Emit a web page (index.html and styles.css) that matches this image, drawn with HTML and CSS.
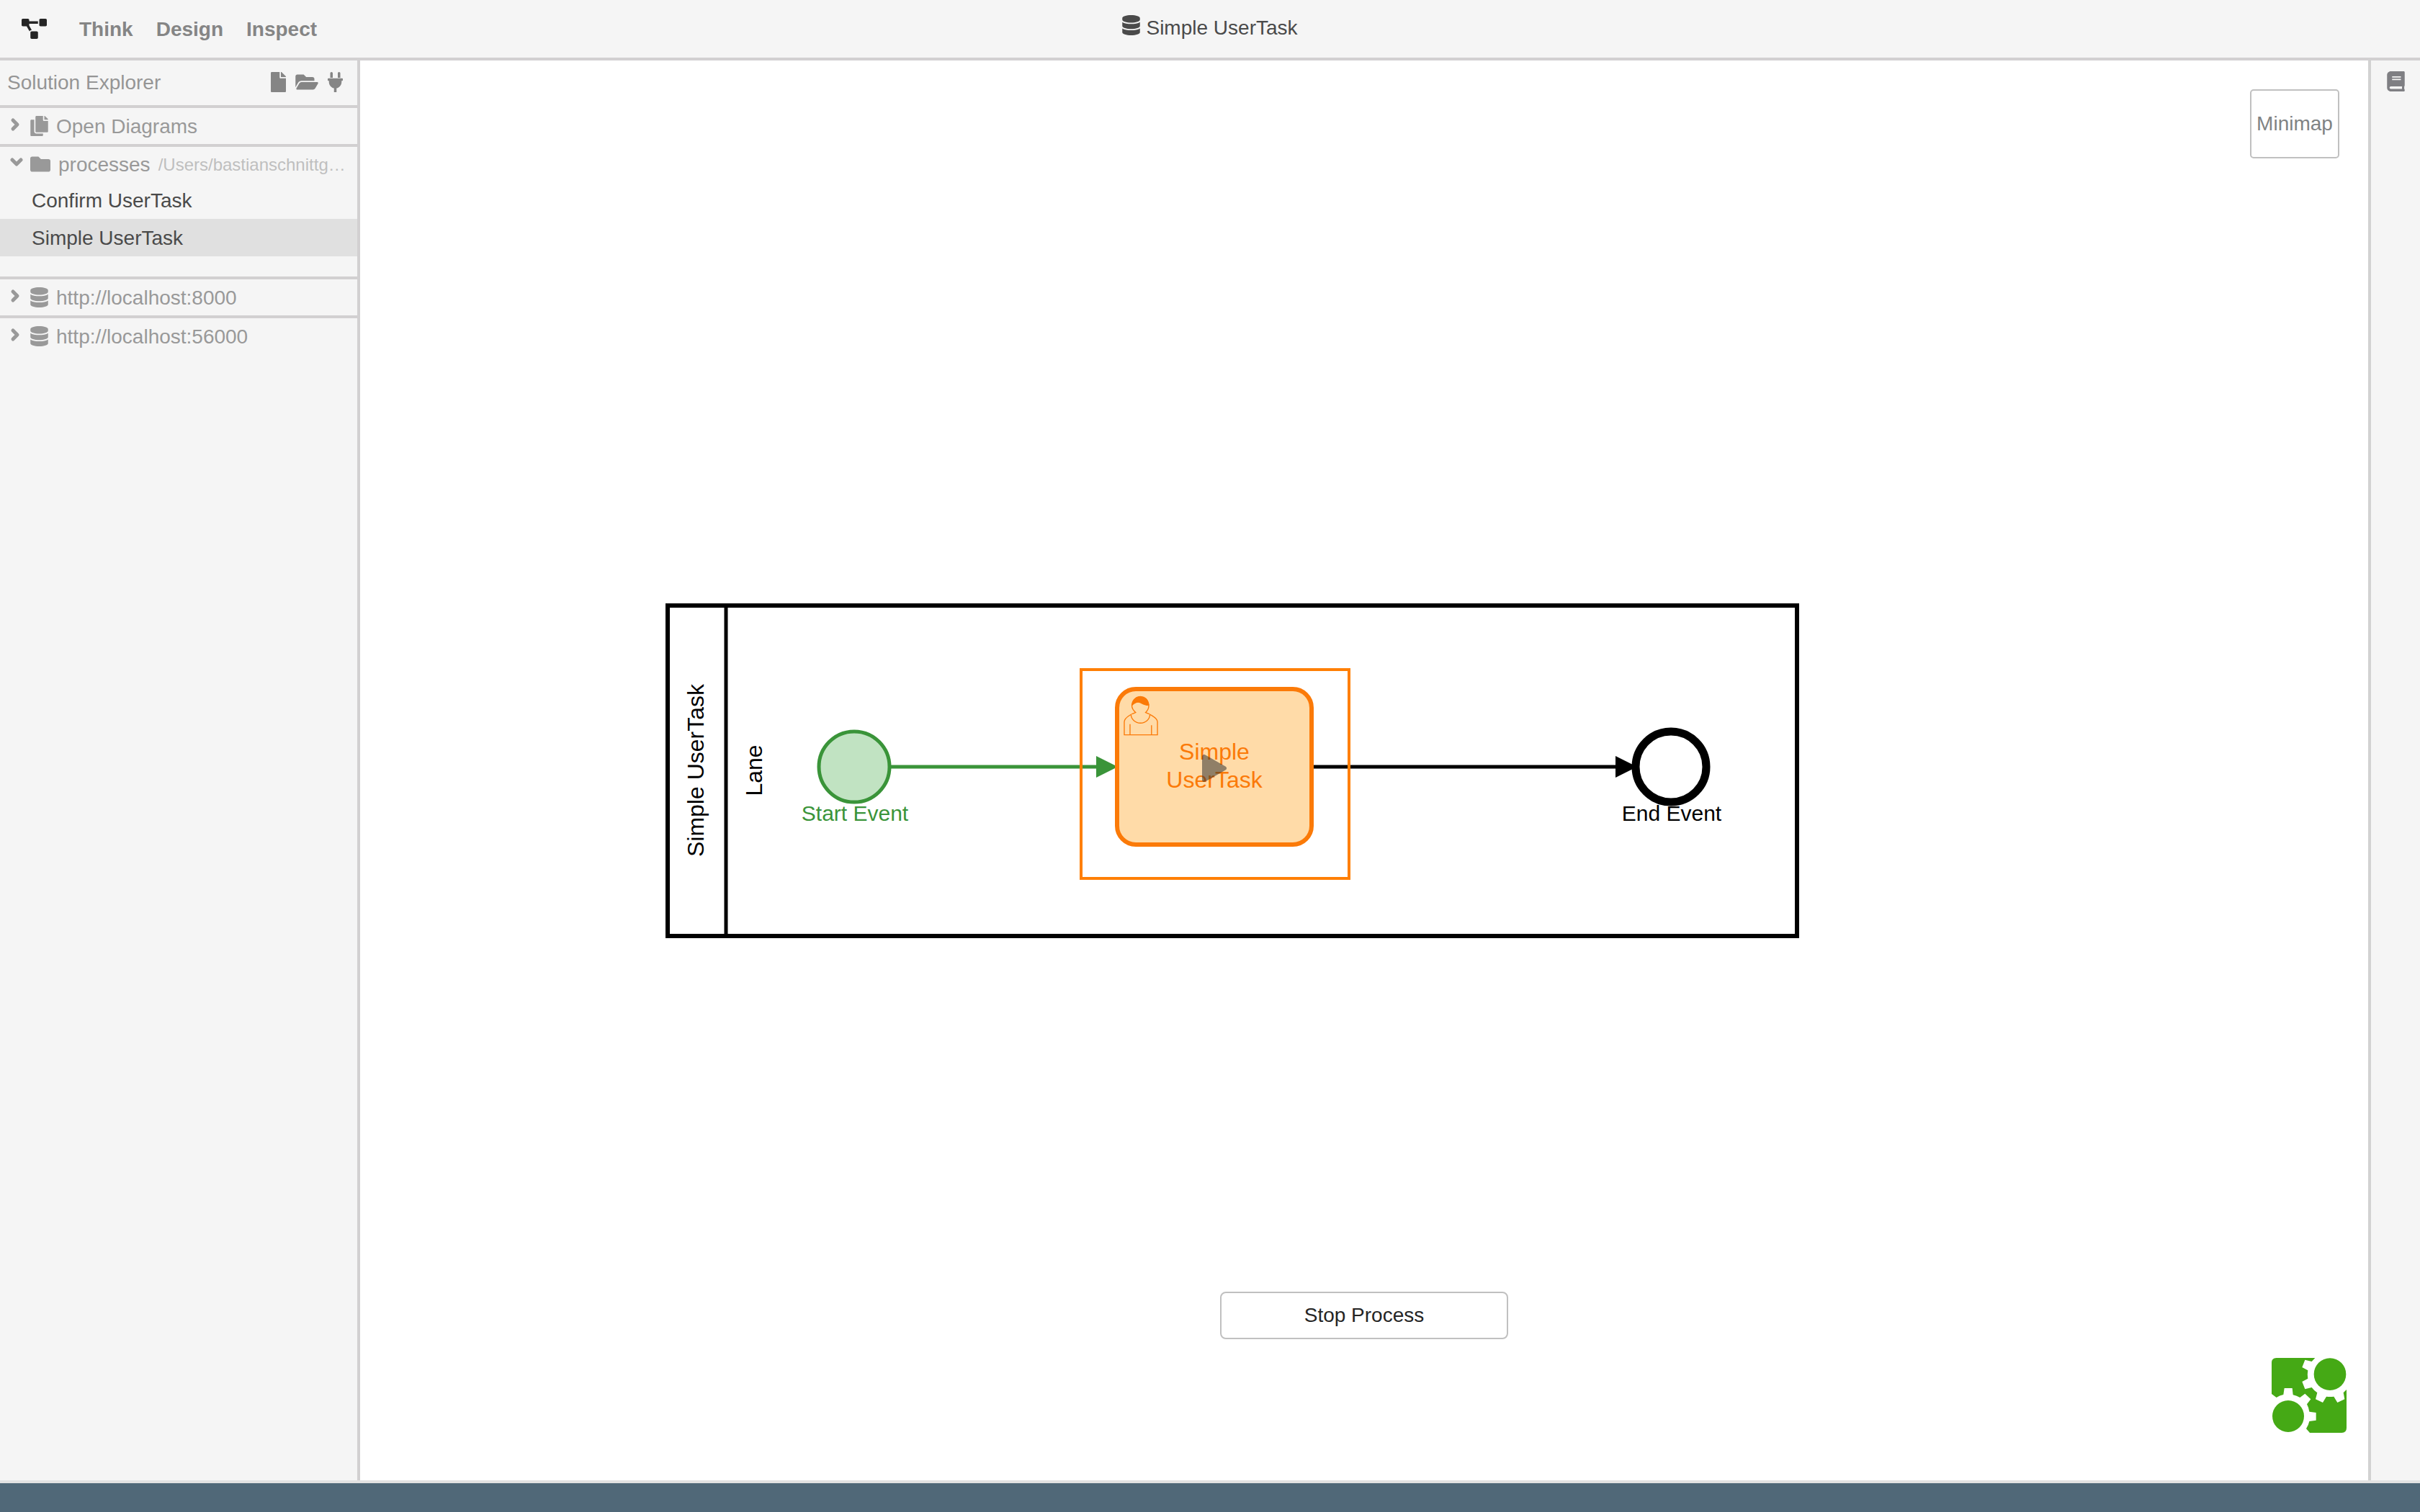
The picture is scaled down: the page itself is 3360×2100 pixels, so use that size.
FILE: index.html
```html
<!DOCTYPE html>
<html lang="en">
<head>
<meta charset="utf-8">
<title>Simple UserTask</title>
<link rel="stylesheet" href="styles.css">
</head>
<body class="app">
<svg class="sprite" aria-hidden="true">
  <symbol id="database" viewBox="0 0 448 512"><path d="M448 73.143v45.714C448 159.143 347.667 192 224 192S0 159.143 0 118.857V73.143C0 32.857 100.333 0 224 0s224 32.857 224 73.143zM448 176v102.857C448 319.143 347.667 352 224 352S0 319.143 0 278.857V176c48.125 33.143 136.208 48.572 224 48.572S399.874 209.143 448 176zm0 160v102.857C448 479.143 347.667 512 224 512S0 479.143 0 438.857V336c48.125 33.143 136.208 48.572 224 48.572S399.874 369.143 448 336z"/></symbol>
  <symbol id="chevron-right" viewBox="0 0 20 28"><path class="chevron" d="M4 6l6 6-6 6"/></symbol>
  <symbol id="chevron-down" viewBox="0 0 20 28"><path class="chevron" d="M3 8l6 6 6-6"/></symbol>
</svg>

<header class="topbar">
  <nav class="nav">
    <svg class="icon logo" viewBox="0 0 640 512" aria-hidden="true"><path d="M384 320H256c-17.67 0-32 14.33-32 32v128c0 17.67 14.33 32 32 32h128c17.67 0 32-14.33 32-32V352c0-17.67-14.33-32-32-32zM192 32c0-17.67-14.33-32-32-32H32C14.33 0 0 14.33 0 32v128c0 17.67 14.33 32 32 32h95.72l73.16 128.04C211.98 300.98 232.4 288 256 288h.28L192 175.51V128h224V64H192V32zM608 0H480c-17.67 0-32 14.33-32 32v128c0 17.67 14.33 32 32 32h128c17.67 0 32-14.33 32-32V32c0-17.67-14.33-32-32-32z"/></svg>
    <a class="nav-link" href="#think">Think</a>
    <a class="nav-link" href="#design">Design</a>
    <a class="nav-link" href="#inspect">Inspect</a>
  </nav>
  <div class="title">
    <svg class="icon icon-mid" aria-hidden="true"><use href="#database"/></svg>
    <span class="title-text">Simple UserTask</span>
  </div>
</header>

<div class="workspace">
  <aside class="explorer">
    <div class="explorer-head">
      <span class="explorer-title">Solution Explorer</span>
      <button class="tool" type="button" aria-label="New diagram"><svg class="icon icon-narrow" viewBox="0 0 384 512"><path d="M224 136V0H24C10.7 0 0 10.7 0 24v464c0 13.3 10.7 24 24 24h336c13.3 0 24-10.7 24-24V160H248c-13.2 0-24-10.8-24-24zm160-14.1v6.1H256V0h6.1c6.4 0 12.5 2.5 17 7l97.9 98c4.5 4.5 7 10.6 7 16.9z"/></svg></button>
      <button class="tool" type="button" aria-label="Open solution"><svg class="icon icon-wide" viewBox="0 0 576 512"><path d="M572.694 292.093L500.27 416.248A63.997 63.997 0 0 1 444.989 448H45.025c-18.523 0-30.064-20.093-20.731-36.093l72.424-124.155A64 64 0 0 1 152 256h399.964c18.523 0 30.064 20.093 20.73 36.093zM152 224h328v-48c0-26.51-21.49-48-48-48H272l-64-64H48C21.49 64 0 85.49 0 112v278.046l69.077-118.418C86.214 242.25 117.989 224 152 224z"/></svg></button>
      <button class="tool" type="button" aria-label="Connect to engine"><svg class="icon icon-narrow" viewBox="0 0 384 512"><path d="M256 144V32c0-17.673 14.327-32 32-32s32 14.327 32 32v112h-64zm112 16H16c-8.837 0-16 7.163-16 16v32c0 8.837 7.163 16 16 16h16v32c0 77.406 54.969 141.971 128 156.796V512h64v-99.204c73.031-14.825 128-79.39 128-156.796v-32h16c8.837 0 16-7.163 16-16v-32c0-8.837-7.163-16-16-16zm-240-16V32c0-17.673-14.327-32-32-32S64 14.327 64 32v112h64z"/></svg></button>
    </div>

    <section class="solution">
      <button class="solution-head" type="button" aria-expanded="false">
        <svg class="icon icon-chevron" aria-hidden="true"><use href="#chevron-right"/></svg>
        <svg class="icon icon-mid" viewBox="0 0 448 512" aria-hidden="true"><path d="M320 448v40c0 13.255-10.745 24-24 24H24c-13.255 0-24-10.745-24-24V120c0-13.255 10.745-24 24-24h72v296c0 30.879 25.121 56 56 56h168zm0-344V0H152c-13.255 0-24 10.745-24 24v368c0 13.255 10.745 24 24 24h272c13.255 0 24-10.745 24-24V128H344c-13.2 0-24-10.8-24-24zm120.971-31.029L375.029 7.029A24 24 0 0 0 358.059 0H352v96h96v-6.059a24 24 0 0 0-7.029-16.97z"/></svg>
        <span class="solution-name">Open Diagrams</span>
      </button>
    </section>

    <section class="solution solution-open">
      <button class="solution-head" type="button" aria-expanded="true">
        <svg class="icon icon-chevron" aria-hidden="true"><use href="#chevron-down"/></svg>
        <svg class="icon icon-folder" viewBox="0 0 512 512" aria-hidden="true"><path d="M464 128H272l-64-64H48C21.49 64 0 85.49 0 112v288c0 26.51 21.49 48 48 48h416c26.51 0 48-21.49 48-48V176c0-26.51-21.49-48-48-48z"/></svg>
        <span class="solution-name">processes</span>
        <span class="solution-path">/Users/bastianschnittg…</span>
      </button>
      <ul class="files">
        <li><a class="file" href="#confirm">Confirm UserTask</a></li>
        <li><a class="file file-active" href="#simple">Simple UserTask</a></li>
      </ul>
    </section>

    <section class="solution">
      <button class="solution-head" type="button" aria-expanded="false">
        <svg class="icon icon-chevron" aria-hidden="true"><use href="#chevron-right"/></svg>
        <svg class="icon icon-mid" aria-hidden="true"><use href="#database"/></svg>
        <span class="solution-name">http://localhost:8000</span>
      </button>
    </section>

    <section class="solution">
      <button class="solution-head" type="button" aria-expanded="false">
        <svg class="icon icon-chevron" aria-hidden="true"><use href="#chevron-right"/></svg>
        <svg class="icon icon-mid" aria-hidden="true"><use href="#database"/></svg>
        <span class="solution-name">http://localhost:56000</span>
      </button>
    </section>
  </aside>

  <main class="canvas">
    <svg class="diagram" width="1582" height="472" viewBox="0 0 1582 472" role="img" aria-label="Simple UserTask process">
      <!-- pool and lane -->
      <rect class="pool" x="7" y="7" width="1568" height="459"/>
      <path class="flow" d="M88 7v459"/>
      <text class="label" transform="translate(57 236) rotate(-90)">Simple UserTask</text>
      <text class="label" transform="translate(138 236) rotate(-90)">Lane</text>

      <!-- start event, already passed -->
      <path class="flow flow-done" d="M317 231H604"/>
      <path class="head-done" d="M602 216l30 15-30 15z"/>
      <circle class="start" cx="266" cy="231" r="49"/>
      <text class="label label-small label-done" x="267" y="306">Start Event</text>

      <!-- end event -->
      <path class="flow" d="M903 231h422"/>
      <path d="M1323 216l30 15-30 15z"/>
      <circle class="end" cx="1400" cy="231" r="49"/>
      <text class="label label-small" x="1401" y="306">End Event</text>

      <!-- active user task -->
      <rect class="task" x="631" y="123" width="270" height="216" rx="26"/>
      <g class="user" transform="translate(630 123) scale(2.71)">
        <path d="m15,12c.909-.845 1.594-2.049 1.594-3.385 0-2.554-1.805-4.622-4.357-4.622-2.552 0-4.288 2.068-4.288 4.622 0 1.348.974 2.562 1.896 3.405-.529.187-5.669 2.097-5.794 4.756v6.718h17v-6.718c0-2.298-5.528-4.595-6.051-4.776zm-8,6v5.5m11,0v-5"/>
        <path d="m17.162 13.009c0 2.447-2.158 4.431-4.821 4.431s-4.822-1.981-4.822-4.431"/>
        <path class="user-hair" d="m8.1 8.2c0 0 2.25-2.358 4.274-1.177 2.024 1.181 4.221 1.537 4.124.965-.098-.57-.117-3.791-4.191-4.136-3.572 0-4.208 4.348-4.207 4.348z"/>
      </g>
      <text class="label label-task" x="766" y="221">Simple</text>
      <text class="label label-task" x="766" y="260">UserTask</text>
      <path class="play" d="M752 217v32l28-16z"/>
      <rect class="outline" x="581" y="96" width="372" height="290"/>
    </svg>

    <button class="minimap" type="button">Minimap</button>
    <button class="stop" type="button">Stop Process</button>

    <svg class="brand" viewBox="0 0 312 312" role="img" aria-label="bpmn.io">
      <path d="M20 0H181L167 15L139 8L127 39L151 52A93 93 0 0 0 151 86L127 99L139 130L167 123A93 93 0 0 0 190 145L183 172L213 186L228 161A93 93 0 0 0 259 161L274 186L304 172L299 145L312 132V292Q312 312 292 312H159L144 295A90 90 0 0 0 157 264L185 260V228L157 224A90 90 0 0 0 147 193L163 172L139 149L118 165A90 90 0 0 0 89 154L86 126H53L49 153A90 90 0 0 0 20 165L0 150V20Q0 0 20 0z"/>
      <circle cx="243" cy="68" r="67"/>
      <circle cx="69" cy="243" r="66"/>
    </svg>
  </main>

  <aside class="panel">
    <button class="tool tool-panel" type="button" aria-label="Properties"><svg class="icon icon-mid" viewBox="0 0 448 512"><path d="M448 360V24c0-13.3-10.7-24-24-24H96C43 0 0 43 0 96v320c0 53 43 96 96 96h328c13.3 0 24-10.7 24-24v-16c0-7.5-3.5-14.3-8.9-18.7-4.2-15.4-4.2-59.3 0-74.7 5.4-4.3 8.9-11.1 8.9-18.6zM128 134c0-3.3 2.7-6 6-6h212c3.3 0 6 2.7 6 6v20c0 3.3-2.7 6-6 6H134c-3.3 0-6-2.7-6-6v-20zm0 64c0-3.3 2.7-6 6-6h212c3.3 0 6 2.7 6 6v20c0 3.3-2.7 6-6 6H134c-3.3 0-6-2.7-6-6v-20zm253.4 250H96c-17.7 0-32-14.3-32-32 0-17.6 14.4-32 32-32h285.4c-1.9 17.1-1.9 46.9 0 64z"/></svg></button>
  </aside>
</div>

<footer class="statusbar"></footer>
</body>
</html>
```

FILE: styles.css
```css
* {
  box-sizing: border-box;
}

.app {
  display: flex;
  flex-direction: column;
  height: 100vh;
  margin: 0;
  background: #fff;
  color: #4a4a4a;
  font-family: "Liberation Sans", Arial, sans-serif;
  font-size: 28px;
  line-height: 32px;
}

.sprite {
  display: none;
}

button {
  padding: 0;
  border: 0;
  background: none;
  color: inherit;
  font: inherit;
  cursor: pointer;
}

a {
  color: inherit;
  text-decoration: none;
}

/* icons */

.icon {
  display: block;
  flex: none;
  height: 28px;
  fill: currentColor;
}

.icon-narrow {
  width: 21px;
}

.icon-mid {
  width: 25px;
}

.icon-folder {
  width: 28px;
}

.icon-wide {
  width: 32px;
}

.icon-chevron {
  width: 20px;
}

.chevron {
  fill: none;
  stroke: currentColor;
  stroke-width: 5;
  stroke-linecap: round;
  stroke-linejoin: round;
}

/* top bar */

.topbar {
  display: grid;
  grid-template-columns: 1fr auto 1fr;
  align-items: center;
  flex: none;
  height: 84px;
  border-bottom: 4px solid #d2d0d1;
  background: #f5f5f5;
}

.nav {
  display: flex;
  align-items: center;
  gap: 32px;
  padding-left: 30px;
}

.logo {
  width: 35px;
  margin-right: 13px;
  color: #252525;
}

.nav-link {
  padding-top: 2px;
  color: #858585;
  font-weight: bold;
}

.title {
  display: flex;
  align-items: flex-start;
  gap: 8px;
  padding-bottom: 4px;
}

.title-text {
  padding-top: 2px;
}

/* columns */

.workspace {
  display: flex;
  flex: 1;
  min-height: 0;
}

.explorer {
  flex: none;
  width: 500px;
  border-right: 4px solid #d2d0d1;
  background: #f5f5f5;
  color: #999;
}

.explorer-head {
  display: flex;
  align-items: center;
  gap: 13px;
  height: 62px;
  padding: 0 20px 2px 10px;
}

.explorer-title {
  flex: 1;
  padding-top: 2px;
  color: #959595;
}

.tool {
  color: #858585;
}

.solution {
  border-top: 4px solid #d2d0d1;
}

.solution-head {
  display: flex;
  align-items: center;
  gap: 8px;
  width: 100%;
  height: 50px;
  padding-left: 14px;
  text-align: left;
}

.solution-name {
  padding: 2px 0 0 3px;
}

.solution-path {
  padding: 2px 0 0 3px;
  color: #bfbfbf;
  font-size: 24px;
}

.solution-open {
  padding-bottom: 28px;
}

.solution-open .solution-head {
  height: 48px;
}

.files {
  margin: 0;
  padding: 0;
  list-style: none;
}

.file {
  display: block;
  padding: 11px 44px 9px;
  color: #4a4a4a;
}

.file-active {
  background: #e0e0e0;
}

/* diagram canvas */

.canvas {
  position: relative;
  display: flex;
  align-items: center;
  flex: 1;
  min-width: 0;
  padding-left: 420px;
  overflow: hidden;
}

.diagram {
  flex: none;
}

.pool {
  fill: none;
  stroke: #000;
  stroke-width: 6;
}

.flow {
  fill: none;
  stroke: #000;
  stroke-width: 5;
}

.flow-done {
  stroke: #3a9439;
}

.head-done,
.label-done {
  fill: #3a9439;
}

.start {
  fill: #c1e3c2;
  stroke: #3a9439;
  stroke-width: 5;
}

.end {
  fill: #fff;
  stroke: #000;
  stroke-width: 11;
}

.task {
  fill: #ffdba8;
  stroke: #fb7a08;
  stroke-width: 6;
}

.outline {
  fill: none;
  stroke: #ff7f04;
  stroke-width: 4;
}

.user {
  fill: #ffdba8;
  stroke: #fb7a08;
  stroke-width: 0.5;
}

.user-hair {
  fill: #fb7a08;
}

.play {
  fill: #2c2c2c;
  stroke: #2c2c2c;
  stroke-width: 6;
  stroke-linejoin: round;
  opacity: 0.52;
}

.label {
  font-size: 32px;
  text-anchor: middle;
}

.label-small {
  font-size: 30px;
}

.label-task {
  fill: #fb7a08;
}

/* controls floating over the canvas */

.minimap {
  position: absolute;
  top: 40px;
  right: 40px;
  width: 124px;
  height: 96px;
  border: 2px solid #c0c0c0;
  border-radius: 5px;
  background: #fff;
  color: #808384;
}

.stop {
  position: absolute;
  bottom: 196px;
  left: calc(50% - 200px);
  width: 400px;
  height: 66px;
  border: 2px solid #c0c0c0;
  border-radius: 8px;
  background: #fff;
  color: #252525;
}

.brand {
  position: absolute;
  right: 30px;
  bottom: 66px;
  width: 104px;
  height: 104px;
  fill: #45a915;
}

/* collapsed side panel */

.panel {
  flex: none;
  width: 72px;
  padding: 15px 22px;
  border-left: 4px solid #d2d2d2;
  background: #f5f5f5;
}

.tool-panel {
  color: #7f7f83;
}

.statusbar {
  flex: none;
  height: 44px;
  border-top: 4px solid #e2e2e2;
  background: #506878;
}
```
